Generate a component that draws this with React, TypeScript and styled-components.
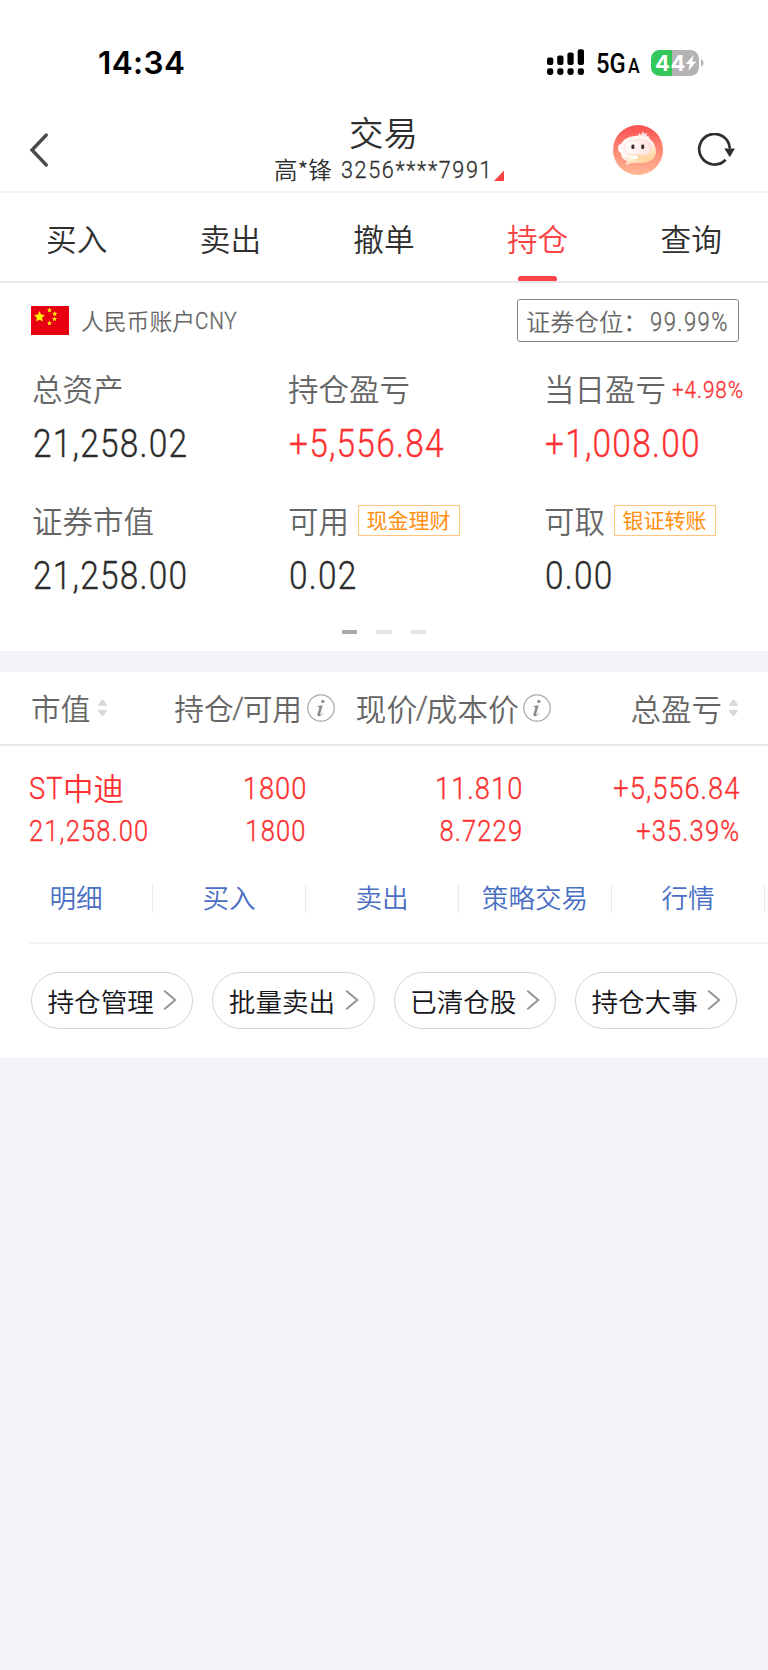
import React from 'react';
import styled, { createGlobalStyle } from 'styled-components';

const RED = '#fd3031';
const ACCENT = '#fb4244';
const CJK = '"Noto Sans CJK SC", sans-serif';

const GlobalStyle = createGlobalStyle`
  * { box-sizing: border-box; }
  body { margin: 0; background: #f3f4f8; font-family: ${CJK}; color: #2f2f2f; }
`;

const Page = styled.div`
  width: 768px;
  min-height: 1670px;
  background: #f3f4f8;
`;

const Panel = styled.section`
  background: #fff;
`;

/* Narrow DIN-like figures */
const Num = styled.span<{ $size: number; $right?: boolean; $space?: number; $drop?: number }>`
  display: inline-block;
  font-family: Roboto, ${CJK};
  font-weight: 300;
  -webkit-text-stroke: 0.35px currentColor;
  font-size: ${p => p.$size}px;
  letter-spacing: ${p => p.$space ?? 0.037}em;
  line-height: 1;
  white-space: nowrap;
  transform: translateY(${p => p.$drop ?? 1}px) scaleX(0.88);
  transform-origin: ${p => (p.$right ? 'right' : 'left')} center;
`;

const StatusBar = styled.div`
  display: flex;
  align-items: center;
  height: 125px;
  padding-left: 98px;
`;

const Clock = styled.div`
  width: 449px;
  padding-top: 1px;
  font: 600 31.5px/1 Inter, sans-serif;
  color: #000;
  letter-spacing: 0.4px;
`;

const Network = styled.div`
  display: flex;
  align-items: baseline;
  width: 54px;
  margin-left: 11px;
  padding-top: 3px;
  font: 500 27px/1 Roboto, sans-serif;
  color: #000;
  white-space: nowrap;
`;

const NetworkName = styled.span`
  width: 31.5px;
  transform: scaleX(0.88);
  transform-origin: left;
`;

const NetworkSuffix = styled.span`
  font-size: 21px;
  transform: scaleX(0.84);
  transform-origin: left;
`;

const Battery = styled.div`
  display: flex;
  align-items: center;
  width: 48px;
  height: 26px;
  margin-left: 1px;
  padding-left: 4px;
  border-radius: 8.5px;
  background: linear-gradient(90deg, #34c759 43.5%, #b3b3b5 43.5%);
  color: #fff;
  font: 700 22px/26px Inter, sans-serif;
`;

const BatteryLevel = styled.span`
  width: 30px;
  letter-spacing: 0.6px;
`;

const NavBar = styled.header`
  display: flex;
  align-items: center;
  height: 68px;
  padding: 0 33px 0 29px;
  border-bottom: 2px solid #f2f3f7;
`;

const NavSide = styled.div<{ $end?: boolean }>`
  display: flex;
  flex: 1;
  align-items: center;
  justify-content: ${p => (p.$end ? 'flex-end' : 'flex-start')};
  gap: 34px;
  margin-top: -16px;
`;

const NavTitle = styled.div`
  display: flex;
  flex-direction: column;
  align-items: flex-start;
  width: 232px;
  margin: -17px -8px 0 8px;
`;

const Title = styled.h1`
  width: 100%;
  margin: 0;
  padding-right: 13px;
  font-size: 34.5px;
  font-weight: 350;
  line-height: 39px;
  text-align: center;
`;

const Account = styled.div`
  display: flex;
  align-items: center;
  width: 100%;
  height: 37px;
  font-size: 23.5px;
  font-weight: 350;
  white-space: nowrap;
`;

const AccountNumber = styled.span`
  display: flex;
  width: 153px;
  margin-left: 9px;
`;

const Tabs = styled.nav`
  display: grid;
  grid-template-columns: repeat(5, 1fr);
  height: 90px;
  border-bottom: 2px solid #e6e6ee;
`;

const Tab = styled.div<{ $active?: boolean }>`
  display: flex;
  flex-direction: column;
  align-items: center;
  justify-content: space-between;
  padding-top: 22px;
  font-size: 30.7px;
  font-weight: 350;
  line-height: 46px;
  color: ${p => (p.$active ? ACCENT : '#2f2f2f')};
  &::after {
    content: '';
    width: 38.4px;
    height: 5px;
    border-radius: 3px 3px 1px 1px;
    background: ${p => (p.$active ? ACCENT : 'transparent')};
  }
`;

const CurrencyRow = styled.div`
  display: flex;
  align-items: center;
  height: 75px;
  padding: 0 29px 0 31px;
  font-size: 22.8px;
  font-weight: 350;
  color: #666;
`;

const CurrencyName = styled.div`
  display: flex;
  align-items: center;
  flex: 1;
  padding-left: 12px;
`;

const PositionBox = styled.div`
  display: flex;
  align-items: center;
  width: 222px;
  height: 43px;
  padding: 0 0 1px 8px;
  border: 1.5px solid #858585;
  border-radius: 3px;
  font-size: 24.3px;
  white-space: nowrap;
`;

const PositionValue = styled.span`
  display: flex;
  margin-left: 3px;
`;

const Stats = styled.div`
  display: grid;
  grid-template-columns: repeat(3, 256px);
  grid-auto-rows: 101px;
  row-gap: 31px;
  height: 262px;
  padding-top: 9px;
`;

const Stat = styled.div`
  padding-left: 32px;
`;

const StatLabel = styled.div`
  display: flex;
  align-items: center;
  height: 46px;
  padding-bottom: 4px;
  font-size: 30.5px;
  font-weight: 350;
  color: #666;
  white-space: nowrap;
`;

const StatValue = styled.div<{ $gain?: boolean }>`
  display: flex;
  align-items: center;
  height: 62px;
  padding-left: 1px;
  color: ${p => (p.$gain ? RED : '#2b2b2b')};
`;

const Rate = styled.span`
  display: flex;
  margin-left: 6px;
  color: ${RED};
`;

const Tag = styled.span`
  width: 102px;
  height: 31px;
  margin-left: 9px;
  padding-right: 1px;
  border: 1.5px solid #ffc47d;
  font-size: 21px;
  font-weight: 400;
  line-height: 27px;
  text-align: center;
  color: #ff9010;
`;

const Pager = styled.div`
  display: flex;
  justify-content: center;
  gap: 19px;
  height: 31px;
  padding-top: 10px;
`;

const PagerDash = styled.i<{ $on?: boolean }>`
  width: 15.4px;
  height: 4px;
  background: ${p => (p.$on ? '#aaa' : '#e5e5e5')};
`;

const Holdings = styled(Panel)`
  margin-top: 21px;
`;

const TableRow = styled.div`
  display: grid;
  grid-template-columns: 120px 184px 216px 187px;
  padding-left: 31px;
  white-space: nowrap;
`;

const TableHead = styled(TableRow)`
  height: 74px;
  border-bottom: 2px solid #e6e6ee;
  font-weight: 350;
  color: #666;
`;

const HeadCell = styled.div<{ $start?: boolean; $size?: number; $gap?: number }>`
  display: flex;
  align-items: center;
  justify-content: ${p => (p.$start ? 'flex-start' : 'flex-end')};
  gap: ${p => p.$gap ?? 7}px;
  font-size: ${p => p.$size ?? 29.7}px;
`;

const HeadText = styled.span`
  display: flex;
  align-items: center;
  padding-bottom: 1px;
`;

const Slash = styled.span`
  display: flex;
  justify-content: center;
  width: 9px;
  font-family: Roboto, sans-serif;
  font-weight: 300;
  -webkit-text-stroke: 0.35px currentColor;
`;

const Position = styled(TableRow)`
  padding-top: 20px;
  height: 115px;
  color: ${RED};
`;

const Cell = styled.div<{ $start?: boolean; $inset?: boolean }>`
  display: flex;
  flex-direction: column;
  align-items: ${p => (p.$start ? 'flex-start' : 'flex-end')};
  margin-left: ${p => (p.$start ? '-2px' : 0)};
  margin-right: -2px;
  padding-right: ${p => (p.$inset ? 30 : 0)}px;
`;

const CellLine = styled.div`
  display: flex;
  align-items: center;
  height: 43px;
  font-size: 30.5px;
  font-weight: 350;
`;

const Ticker = styled.span`
  display: flex;
  width: 34px;
`;

const TickerName = styled.span`
  padding-bottom: 2px;
`;

const Actions = styled.div`
  display: grid;
  grid-template-columns: repeat(5, 153px);
  align-items: center;
  height: 81px;
  padding-bottom: 7px;
`;

const Action = styled.div`
  height: 29px;
  border-right: 1.5px solid #e9e9ee;
  font-size: 26.6px;
  font-weight: 350;
  line-height: 25px;
  text-align: center;
  color: #4a6fc3;
`;

const Pills = styled.div`
  display: grid;
  grid-template-columns: repeat(4, 162.3px);
  gap: 19px;
  margin-left: 29px;
  padding: 28px 0 29px 2px;
  border-top: 2px solid #f2f3f7;
`;

const Pill = styled.div`
  display: flex;
  align-items: center;
  justify-content: space-between;
  height: 57px;
  padding: 0 15px 0 15.5px;
  border: 1.3px solid #d3d3dd;
  border-radius: 29px;
  font-size: 26.6px;
  font-weight: 350;
  color: #17171b;
  white-space: nowrap;
`;

const SignalIcon = () => (
  <svg width="38" height="27" viewBox="0 0 38 27">
    {[[8.5, 0], [6.5, 10.2], [3.5, 20.4], [0.2, 30.7]].map(([top, x]) => (
      <g key={x}>
        <rect x={x} y={top} width="6.3" height={16 - top} rx="2" />
        <rect x={x} y="19.3" width="6.3" height="6.7" rx="2.4" />
      </g>
    ))}
  </svg>
);

const BoltIcon = () => (
  <svg width="12" height="18" viewBox="0 0 12 18">
    <path d="M8.8 1 .6 10h4.2L3.2 17l8.2-9.4H7.2Z" fill="#fff" />
  </svg>
);

const BatteryTip = () => (
  <svg width="5" height="10" viewBox="0 0 5 10">
    <path d="M2 1v8Q4.600 7.500 4.600 5T2 1Z" fill="#b3b3b5" />
  </svg>
);

const BackIcon = () => (
  <svg width="20" height="36" viewBox="0 0 20 36" fill="none" stroke="#4a4a4a" strokeWidth="3.400" strokeLinecap="round">
    <path d="M17.300 3 3 18l14.300 15" />
  </svg>
);

const CornerMark = () => (
  <svg width="10" height="23" viewBox="0 0 10 23">
    <path d="M10 12.500v10.500H0Z" fill={ACCENT} />
  </svg>
);

const AssistantIcon = () => (
  <svg width="50" height="50" viewBox="0 0 50 50">
    <defs>
      <linearGradient id="assistantBg" x1="0" y1="0" x2="0" y2="1">
        <stop offset="0" stopColor="#fa4f50" />
        <stop offset=".55" stopColor="#fd8c76" />
        <stop offset="1" stopColor="#ffb896" />
      </linearGradient>
      <linearGradient id="assistantHead" x1="0" y1="0" x2=".7" y2="1">
        <stop offset="0" stopColor="#fff" />
        <stop offset=".6" stopColor="#fff1ea" />
        <stop offset="1" stopColor="#ffd08c" />
      </linearGradient>
      <linearGradient id="assistantFace" x1="0" y1="0" x2="1" y2="0">
        <stop offset="0" stopColor="#fff" />
        <stop offset="1" stopColor="#ffe2de" />
      </linearGradient>
    </defs>
    <circle cx="25" cy="25" r="25" fill="url(#assistantBg)" />
    <path d="m25 12 1-4 2 2 2-4 1 3 3-1-.5 3 3 .5-1.500 4Z" fill="#ffe6e2" />
    <path d="M9 18c3-6 12-8 21-7 8 1 13 8 13 16 0 7-7 11-15 11H19l-6 2c-1-1 1-2 1-4C9 34 8 31 8 28c-4-1-4-8 1-10Z" fill="url(#assistantHead)" />
    <rect x="12" y="15" width="26.500" height="14.500" rx="7" fill="url(#assistantFace)" stroke="#ffd9d2" strokeWidth=".8" />
    <path d="M12 29q6 6 15 6 10 0 12-7-5 3-12 2Z" fill="#ffd7a0" opacity=".7" />
    <path d="M6.500 20q-1 7 6 10l8 2" fill="none" stroke="#fff" strokeWidth="1.800" />
    <rect x="17.500" y="30.500" width="7.500" height="3.400" rx="1.700" fill="#fff" />
    <rect x="18.400" y="19.500" width="3" height="4.600" rx="1.300" fill="#3a3030" />
    <rect x="28.200" y="19.500" width="3" height="4.600" rx="1.300" fill="#3a3030" />
  </svg>
);

const RefreshIcon = () => (
  <svg width="38" height="34" viewBox="0 0 38 34">
    <path d="M28.600 26.800A15.300 15.300 0 1 1 32.800 15.500" fill="none" stroke="#2f2f2f" strokeWidth="2.700" />
    <path d="M27.300 15.500h10.600L32.800 24.200Z" fill="#2f2f2f" />
  </svg>
);

const star = (cx: number, cy: number, r: number) =>
  Array.from({ length: 10 }, (_, i) => {
    const a = (Math.PI * i) / 5 - Math.PI / 2;
    const d = i % 2 ? r * 0.5 : r;
    return `${cx + d * Math.cos(a)},${cy + d * Math.sin(a)}`;
  }).join(' ');

const FlagIcon = () => (
  <svg width="38" height="29" viewBox="0 0 38 29">
    <rect width="38" height="29" fill="#e60012" />
    {[[8.5, 10.8, 5.7], [18.5, 4.2, 2.6], [23.8, 7.9, 2.6], [23.5, 13, 2.6], [18.5, 17.2, 2.6]].map(([x, y, r]) => (
      <polygon key={`${x}-${y}`} points={star(x, y, r)} fill="#ffee00" />
    ))}
  </svg>
);

const SortIcon = () => (
  <svg width="9" height="18" viewBox="0 0 9 18" fill="#d8d8d8">
    <path d="M0 6.800Q0 5.500 1 4.500L3.300 1.200Q4.500-.4 5.700 1.200L8 4.500Q9 5.500 9 6.800Z" />
    <path d="M0 10.700Q0 12.200 1 13.200L3.300 16.300Q4.500 17.900 5.700 16.300L8 13.200Q9 12.200 9 10.700Z" />
  </svg>
);

const InfoIcon = () => (
  <svg width="28" height="28" viewBox="0 0 28 28">
    <circle cx="14" cy="14" r="13.200" fill="none" stroke="#a8a8a8" strokeWidth="1.200" />
    <circle cx="15.800" cy="7.400" r="1.700" fill="#8c8c8c" />
    <path d="M10.700 12.100 15.800 11.200 13.200 20.300Q13 21.300 13.800 20.700L15.800 18.900 16.200 19.300Q13.800 22.300 11.600 22.300 9.900 22.300 10.500 20.100L12.400 13.500Q12.600 12.700 10.600 12.700Z" fill="#8c8c8c" />
  </svg>
);

const ChevronIcon = () => (
  <svg width="14" height="21" viewBox="0 0 14 21" fill="none" stroke="#8f8f98" strokeWidth="1.800">
    <path d="M1.300 .7 12.300 10 1.300 19.300" />
  </svg>
);

const tabs = ['买入', '卖出', '撤单', '持仓', '查询'];
const actions = ['明细', '买入', '卖出', '策略交易', '行情'];
const pills = ['持仓管理', '批量卖出', '已清仓股', '持仓大事'];
const stats = [
  { label: '总资产', value: '21,258.02' },
  { label: '持仓盈亏', value: '+5,556.84', gain: true },
  { label: '当日盈亏', value: '+1,008.00', gain: true, rate: '+4.98%' },
  { label: '证券市值', value: '21,258.00' },
  { label: '可用', value: '0.02', tag: '现金理财' },
  { label: '可取', value: '0.00', tag: '银证转账' },
];
const figures = [
  { top: '1800', bottom: '1800', inset: true },
  { top: '11.810', bottom: '8.7229', inset: true },
  { top: '+5,556.84', bottom: '+35.39%', inset: false },
];

export default function App() {
  return (
    <Page>
      <GlobalStyle />
      <Panel>
        <StatusBar>
          <Clock>14:34</Clock>
          <SignalIcon />
          <Network>
            <NetworkName>5G</NetworkName>
            <NetworkSuffix>A</NetworkSuffix>
          </Network>
          <Battery>
            <BatteryLevel>44</BatteryLevel>
            <BoltIcon />
          </Battery>
          <BatteryTip />
        </StatusBar>
        <NavBar>
          <NavSide><BackIcon /></NavSide>
          <NavTitle>
            <Title>交易</Title>
            <Account>
              高*锋
              <AccountNumber><Num $size={24.5} $space={0.077}>3256****7991</Num></AccountNumber>
              <CornerMark />
            </Account>
          </NavTitle>
          <NavSide $end>
            <AssistantIcon />
            <RefreshIcon />
          </NavSide>
        </NavBar>
        <Tabs>
          {tabs.map(t => <Tab key={t} $active={t === '持仓'}>{t}</Tab>)}
        </Tabs>
        <CurrencyRow>
          <FlagIcon />
          <CurrencyName>人民币账户<Num $size={23.5}>CNY</Num></CurrencyName>
          <PositionBox>
            证券仓位：
            <PositionValue><Num $size={25} $space={0.065} $drop={2}>99.99%</Num></PositionValue>
          </PositionBox>
        </CurrencyRow>
        <Stats>
          {stats.map(s => (
            <Stat key={s.label}>
              <StatLabel>
                {s.label}
                {s.rate && <Rate><Num $size={23.5} $space={0.045} $drop={3}>{s.rate}</Num></Rate>}
                {s.tag && <Tag>{s.tag}</Tag>}
              </StatLabel>
              <StatValue $gain={s.gain}><Num $size={38} $drop={0}>{s.value}</Num></StatValue>
            </Stat>
          ))}
        </Stats>
        <Pager>
          <PagerDash $on />
          <PagerDash />
          <PagerDash />
        </Pager>
      </Panel>
      <Holdings>
        <TableHead>
          <HeadCell $start $gap={8}><HeadText>市值</HeadText><SortIcon /></HeadCell>
          <HeadCell $gap={5}><HeadText>持仓<Slash>/</Slash>可用</HeadText><InfoIcon /></HeadCell>
          <HeadCell $size={30.9} $gap={4}><HeadText>现价<Slash>/</Slash>成本价</HeadText><InfoIcon /></HeadCell>
          <HeadCell $size={30.5}><HeadText>总盈亏</HeadText><SortIcon /></HeadCell>
        </TableHead>
        <Position>
          <Cell $start>
            <CellLine><Ticker><Num $size={31}>ST</Num></Ticker><TickerName>中迪</TickerName></CellLine>
            <CellLine><Num $size={29} $space={0.045}>21,258.00</Num></CellLine>
          </Cell>
          {figures.map(f => (
            <Cell key={f.top} $inset={f.inset}>
              <CellLine><Num $right $size={31}>{f.top}</Num></CellLine>
              <CellLine><Num $right $size={29} $space={0.045}>{f.bottom}</Num></CellLine>
            </Cell>
          ))}
        </Position>
        <Actions>
          {actions.map(a => <Action key={a}>{a}</Action>)}
        </Actions>
        <Pills>
          {pills.map(p => <Pill key={p}>{p}<ChevronIcon /></Pill>)}
        </Pills>
      </Holdings>
    </Page>
  );
}
